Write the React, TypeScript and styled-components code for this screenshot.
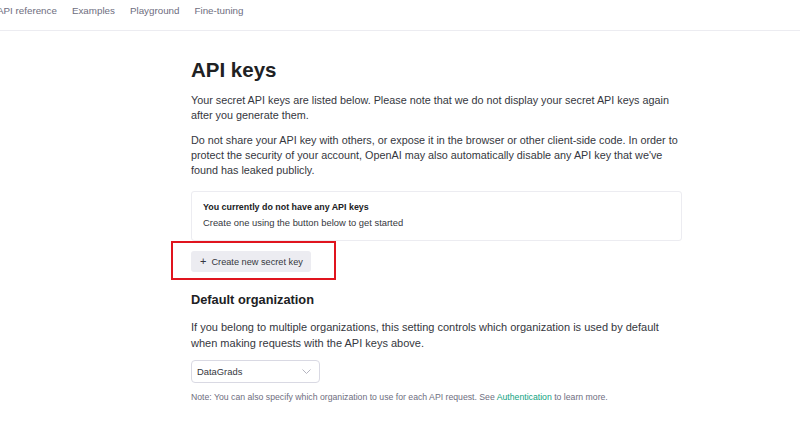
import React from "react";
import styled, { createGlobalStyle } from "styled-components";

const Global = createGlobalStyle`
  html, body { margin: 0; padding: 0; background: #fff; }
  body { font-family: "Liberation Sans", Arial, sans-serif; color: #353740; }
  * { box-sizing: border-box; }
`;

const Page = styled.div`
  width: 800px;
  height: 428px;
  overflow: hidden;
  display: flex;
  flex-direction: column;
`;

const Nav = styled.nav`
  height: 31px;
  border-bottom: 1px solid #ececf1;
  display: flex;
  align-items: flex-start;
  padding-top: 5px;
  margin-left: -3px;
`;

const NavItem = styled.span`
  font-size: 9.8px;
  line-height: 12px;
  color: #6e6e80;
  margin-right: 15px;
  white-space: nowrap;
`;

const Main = styled.main`
  width: 491px;
  margin-left: 191px;
  padding-top: 25px;
  display: flex;
  flex-direction: column;
`;

const Title = styled.h1`
  font-size: 20.5px;
  font-weight: 700;
  color: #202123;
  margin: 0 0 9px;
  line-height: 28px;
`;

const Para = styled.p<{ $gap?: number; $size?: number }>`
  font-size: ${(p) => p.$size ?? 10.8}px;
  line-height: 15.3px;
  margin: 0 0 ${(p) => p.$gap ?? 9}px;
  color: #353740;
`;

const Card = styled.div`
  margin-top: 4px;
  border: 1px solid #ececf1;
  border-radius: 3px;
  padding: 8px 11px 10px;
  display: flex;
  flex-direction: column;
`;

const CardTitle = styled.div`
  font-size: 8.9px;
  font-weight: 700;
  color: #202123;
  line-height: 15px;
`;

const CardText = styled.div`
  font-size: 9.4px;
  color: #353740;
  line-height: 15px;
`;

const ButtonWrap = styled.div`
  position: relative;
  margin-top: 10px;
  align-self: flex-start;
`;

const Highlight = styled.div`
  position: absolute;
  left: -20px;
  top: -10px;
  width: 165px;
  height: 39px;
  border: 2px solid #e0141e;
  pointer-events: none;
`;

const Button = styled.button`
  height: 21px;
  width: 120px;
  background: #ececf1;
  border: none;
  border-radius: 3px;
  display: flex;
  align-items: center;
  gap: 5px;
  padding: 0 9px;
  font-family: inherit;
  font-size: 9.2px;
  color: #353740;
  white-space: nowrap;
`;

const Plus = styled.span`
  font-size: 11px;
  line-height: 1;
  color: #353740;
`;

const SubTitle = styled.h2`
  font-size: 12.8px;
  font-weight: 700;
  color: #202123;
  margin: 18px 0 10px;
  line-height: 20px;
`;

const Select = styled.div`
  margin-top: 9px;
  width: 129px;
  height: 23px;
  border: 1px solid #d9d9e3;
  border-radius: 4px;
  display: flex;
  align-items: center;
  justify-content: space-between;
  padding: 0 8px 0 5px;
  font-size: 9.4px;
  color: #353740;
`;

const Note = styled.div`
  margin-top: 8px;
  font-size: 8.7px;
  line-height: 12px;
  color: #6e6e80;
  white-space: nowrap;
`;

const Link = styled.span`
  color: #10a37f;
`;

export default function App() {
  return (
    <Page>
      <Global />
      <Nav>
        <NavItem>API reference</NavItem>
        <NavItem>Examples</NavItem>
        <NavItem>Playground</NavItem>
        <NavItem>Fine-tuning</NavItem>
      </Nav>
      <Main>
        <Title>API keys</Title>
        <Para>
          Your secret API keys are listed below. Please note that we do not display your secret API keys again after
          you generate them.
        </Para>
        <Para>
          Do not share your API key with others, or expose it in the browser or other client-side code. In order to
          protect the security of your account, OpenAI may also automatically disable any API key that we've found has
          leaked publicly.
        </Para>
        <Card>
          <CardTitle>You currently do not have any API keys</CardTitle>
          <CardText>Create one using the button below to get started</CardText>
        </Card>
        <ButtonWrap>
          <Highlight />
          <Button>
            <Plus>+</Plus>
            Create new secret key
          </Button>
        </ButtonWrap>
        <SubTitle>Default organization</SubTitle>
        <Para $gap={0} $size={11}>
          If you belong to multiple organizations, this setting controls which organization is used by default when
          making requests with the API keys above.
        </Para>
        <Select>
          <span>DataGrads</span>
          <svg width="9" height="5" viewBox="0 0 9 5" fill="none">
            <path d="M0.5 0.5l4 4 4-4" stroke="#b4b4c0" strokeWidth="1" />
          </svg>
        </Select>
        <Note>
          Note: You can also specify which organization to use for each API request. See <Link>Authentication</Link> to
          learn more.
        </Note>
      </Main>
    </Page>
  );
}
